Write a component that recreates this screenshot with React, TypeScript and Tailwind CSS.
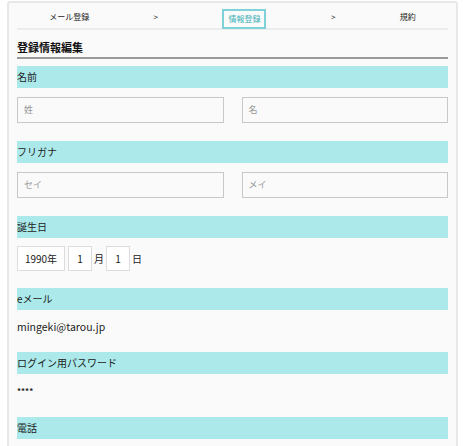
import React from "react";

const Bar = ({ children }: { children: React.ReactNode }) => (
  <div className="h-[22px] bg-[#abe9ea] flex items-center text-[10px] text-[#222] leading-none">
    {children}
  </div>
);

export default function App() {
  return (
    <div
      className="w-[463px] h-[446px] bg-white overflow-hidden pt-[1px]"
      style={{ fontFamily: '"Noto Sans CJK JP", "Noto Sans", sans-serif' }}
    >
      <div className="ml-[7px] mr-[5px] h-[460px] border-2 border-[#e8e8e8] rounded-t-[3px] bg-[#fafafa] px-[8px]">
        <div className="flex justify-around items-end h-[27px] border-b-2 border-[#ececec] text-[8px] text-[#222]">
          <div className="pb-[5px]">メール登録</div>
          <div className="pb-[5px]">&gt;</div>
          <div className="h-[20px] px-[4px] -mb-[1px] flex items-center border-2 border-[#7fd3d8] text-[#3cb0b8]">
            情報登録
          </div>
          <div className="pb-[5px]">&gt;</div>
          <div className="pb-[5px]">規約</div>
        </div>

        <div className="mt-[10px] pb-[3px] border-b-2 border-[#9a9a9a] text-[11px] font-bold text-[#111] leading-[14px]">
          登録情報編集
        </div>

        <div className="mt-[7px]">
          <Bar>名前</Bar>
          <div className="mt-[9px] mb-[18px] flex gap-[18px]">
            <div className="flex-1 h-[26px] border border-[#c8c8c8] flex items-center px-[6px] text-[9px] text-[#999]">姓</div>
            <div className="flex-1 h-[26px] border border-[#c8c8c8] flex items-center px-[6px] text-[9px] text-[#999]">名</div>
          </div>

          <Bar>フリガナ</Bar>
          <div className="mt-[9px] mb-[18px] flex gap-[18px]">
            <div className="flex-1 h-[26px] border border-[#c8c8c8] flex items-center px-[6px] text-[9px] text-[#999]">セイ</div>
            <div className="flex-1 h-[26px] border border-[#c8c8c8] flex items-center px-[6px] text-[9px] text-[#999]">メイ</div>
          </div>

          <Bar>誕生日</Bar>
          <div className="mt-[8px] mb-[17px] flex items-center text-[10px] text-[#222]">
            <div className="w-[48px] h-[25px] border border-[#dcdcdc] bg-white flex items-center justify-center">1990年</div>
            <div className="ml-[3px] w-[24px] h-[25px] border border-[#dcdcdc] bg-white flex items-center justify-center">1</div>
            <div className="ml-[2px] w-[12px]">月</div>
            <div className="w-[24px] h-[25px] border border-[#dcdcdc] bg-white flex items-center justify-center">1</div>
            <div className="ml-[2px]">日</div>
          </div>

          <Bar>eメール</Bar>
          <div className="mt-[9px] mb-[17px] h-[16px] flex items-center text-[10.5px] text-[#222]">mingeki@tarou.jp</div>

          <Bar>ログイン用パスワード</Bar>
          <div className="mt-[9px] mb-[18px] h-[16px] flex items-center text-[8px] font-bold text-[#222]">****</div>

          <Bar>電話</Bar>
        </div>
      </div>
    </div>
  );
}
